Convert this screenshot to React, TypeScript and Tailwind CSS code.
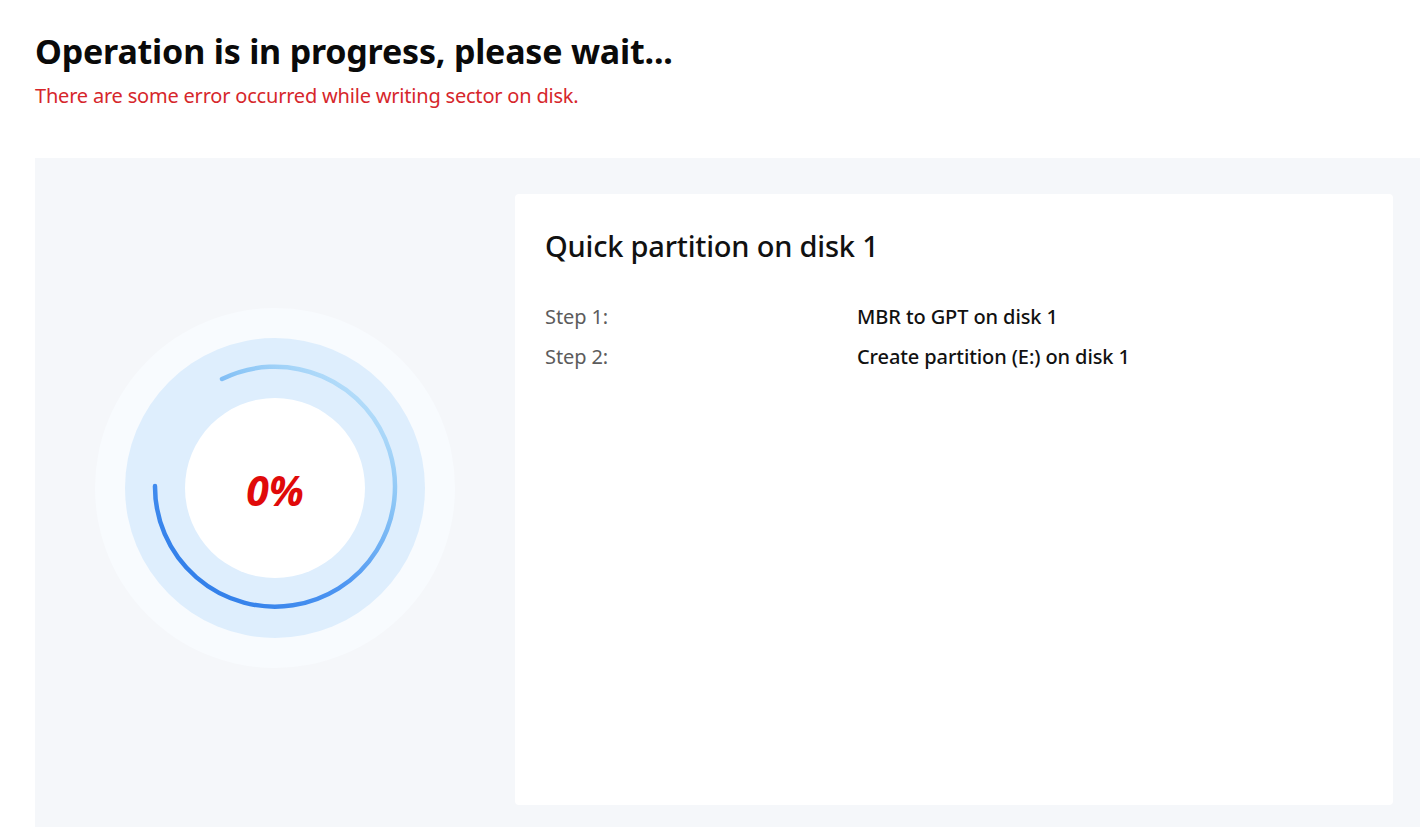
import React from "react";

const steps = [
  { label: "Step 1:", text: "MBR to GPT on disk 1" },
  { label: "Step 2:", text: "Create partition (E:) on disk 1" },
];

function ProgressRing({ percent }: { percent: number }) {
  return (
    <div className="relative w-[360px] h-[360px]">
      <svg width="360" height="360" viewBox="0 0 360 360" className="absolute inset-0">
        <defs>
          <linearGradient id="arcGrad" gradientUnits="userSpaceOnUse" x1="60" y1="300" x2="260" y2="60">
            <stop offset="0" stopColor="#2474e6" />
            <stop offset="0.45" stopColor="#4f97f2" />
            <stop offset="0.75" stopColor="#8cc6f6" />
            <stop offset="1" stopColor="#bfe3fb" />
          </linearGradient>
        </defs>
        <circle cx="180" cy="180" r="180" fill="#f8fbfe" />
        <circle cx="180" cy="180" r="150" fill="#deeefd" />
        <circle cx="180" cy="180" r="90" fill="#ffffff" />
        <path
          d="M 60 178 A 120 120 0 1 0 127 71"
          fill="none"
          stroke="url(#arcGrad)"
          strokeWidth="4.5"
          strokeLinecap="round"
        />
      </svg>
      <div className="absolute inset-0 flex items-center justify-center">
        <span className="text-[41px] font-bold italic text-[#e00a0a] [font-family:'Noto_Sans',sans-serif] leading-none translate-y-[2px]">
          {percent}%
        </span>
      </div>
    </div>
  );
}

export default function App() {
  return (
    <div className="min-h-screen bg-white pl-[35px] [font-family:'Noto_Sans','Open_Sans',sans-serif] overflow-hidden">
      <h1 className="pt-[29px] text-[34px] font-bold leading-[44px] text-[#0a0a0a] tracking-[-0.2px]">
        Operation is in progress, please wait...
      </h1>
      <p className="mt-[9px] text-[20px] leading-[28px] text-[#d6262b] tracking-[-0.2px]">
        There are some error occurred while writing sector on disk.
      </p>

      <div className="mt-[48px] bg-[#f5f7fa] flex h-[700px]">
        <div className="w-[480px] shrink-0 flex justify-center pt-[150px]">
          <ProgressRing percent={0} />
        </div>
        <div className="mt-[36px] w-[878px] h-[611px] bg-white rounded-[4px] px-[30px] pt-[30px]">
          <h2 className="text-[29px] font-medium leading-[44px] text-[#111] tracking-[-0.2px]">
            Quick partition on disk 1
          </h2>
          <div className="mt-[35px] flex flex-col gap-[12px]">
            {steps.map((s) => (
              <div key={s.label} className="flex text-[20px] leading-[28px] tracking-[-0.1px]">
                <span className="w-[312px] text-[#5c5c5c]">{s.label}</span>
                <span className="font-medium text-[#111]">{s.text}</span>
              </div>
            ))}
          </div>
        </div>
      </div>
    </div>
  );
}
